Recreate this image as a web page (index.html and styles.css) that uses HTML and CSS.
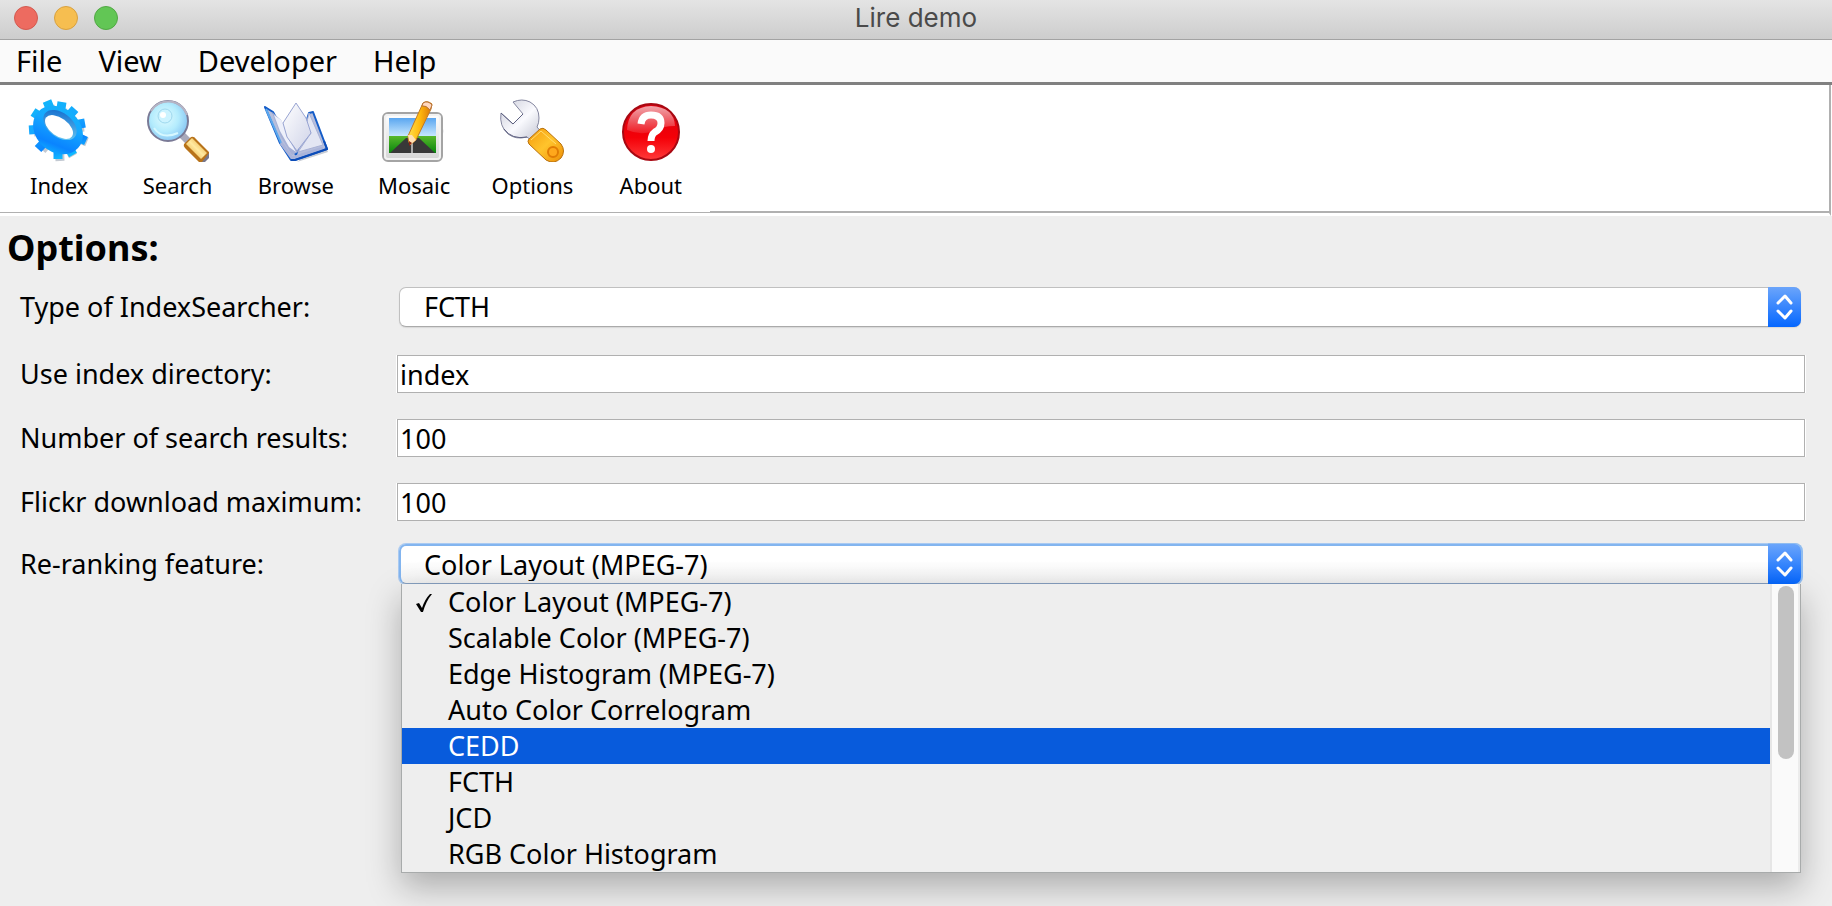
FILE: index.html
```html
<!DOCTYPE html>
<html lang="en">
<head>
<meta charset="utf-8">
<title>Lire demo</title>
<link rel="stylesheet" href="styles.css">
</head>
<body>
<header class="titlebar">
  <div class="lights">
    <button class="light light-close" type="button" aria-label="Close"></button>
    <button class="light light-minimize" type="button" aria-label="Minimize"></button>
    <button class="light light-zoom" type="button" aria-label="Zoom"></button>
  </div>
  <h1 class="window-title">Lire demo</h1>
</header>
<nav class="menubar">
  <button type="button">File</button>
  <button type="button">View</button>
  <button type="button">Developer</button>
  <button type="button">Help</button>
</nav>
<div class="toolbar">
  <div class="tools">
    <button class="tool" type="button">
      <svg viewBox="0 0 64 64" aria-hidden="true">
        <defs>
          <linearGradient id="gear" gradientUnits="userSpaceOnUse" x1="20" y1="4" x2="40" y2="60"><stop offset="0" stop-color="#12b4fa"/><stop offset=".4" stop-color="#16a8ff"/><stop offset=".75" stop-color="#0a84ff"/><stop offset="1" stop-color="#10c0ff"/></linearGradient>
          <linearGradient id="gearhole" x1="0" y1="0" x2="1" y2="1"><stop offset="0" stop-color="#0a62c8"/><stop offset=".5" stop-color="#3f9be0"/><stop offset="1" stop-color="#6fd4f8"/></linearGradient>
        </defs>
        <path d="M32 32L23 8M32 32L36 10M32 32L47 17M32 32L57 29M32 32L60 44M32 32L46 58M32 32L33 63M32 32L15 52M32 32L7 34M32 32L10 18" stroke="#c3c9d2" stroke-width="9"/>
        <path d="M31 30L20 3M31 30L35 4M31 30L48 11M31 30L58 25M31 30L59 43M31 30L46 57M31 30L31 61M31 30L11 51M31 30L2 32M31 30L6 14" stroke="url(#gear)" stroke-width="9"/>
        <ellipse cx="31" cy="32" rx="27" ry="22" transform="rotate(42 31 32)" fill="url(#gear)"/>
        <ellipse cx="33" cy="27" rx="19" ry="12" transform="rotate(38 33 27)" fill="url(#gearhole)"/>
        <ellipse cx="32" cy="29" rx="16" ry="9" transform="rotate(36 32 29)" fill="#fff"/>
      </svg>
      <span>Index</span>
    </button>
    <button class="tool" type="button">
      <svg viewBox="0 0 64 64" aria-hidden="true">
        <defs>
          <radialGradient id="lens" cx=".42" cy=".42" r=".62"><stop offset="0" stop-color="#e2fbff"/><stop offset=".55" stop-color="#b4ecfd"/><stop offset="1" stop-color="#86c4f2"/></radialGradient>
          <linearGradient id="grip" x1="0" y1="1" x2="1" y2="0"><stop offset="0" stop-color="#e39a20"/><stop offset=".5" stop-color="#ffe9a0"/><stop offset="1" stop-color="#e39a20"/></linearGradient>
        </defs>
        <path d="M36 36L43 43" stroke="#a9a9bb" stroke-width="7"/>
        <path d="M39 46L46 39Q49 38 51 41L64 54V59L59 64H54L40 50Q38 48 39 46Z" fill="#b8731a"/>
        <path d="M41 46L47 40L62 55L56 61Z" fill="url(#grip)"/>
        <path d="M64 55V60L60 64H57Z" fill="#77778b"/>
        <circle cx="23" cy="23" r="20" fill="url(#lens)" stroke="#7a7a96" stroke-width="2"/>
        <path d="M6 13A20 20 0 0 1 42 17" fill="none" stroke="#b6b4c4" stroke-width="2"/>
        <circle cx="20" cy="18" r="7" fill="#ccf3ff" stroke="#9ed8ee"/>
        <circle cx="18" cy="17" r="3" fill="#fff"/>
        <path d="M9 30Q17 42 33 35" fill="none" stroke="#d6f8ff" stroke-width="2"/>
      </svg>
      <span>Search</span>
    </button>
    <button class="tool" type="button">
      <svg viewBox="0 0 64 64" aria-hidden="true">
        <defs><linearGradient id="page" x1="0" y1="0" x2="1" y2="1"><stop offset="0" stop-color="#fff"/><stop offset="1" stop-color="#cfd3e8"/></linearGradient></defs>
        <path d="M33 64L64 54L62 49L50 16L58 44Z" fill="#c8ccd4"/>
        <path d="M1 9L9 14L32 57L45 15L49 14L63 51L31 62H27L16 45Z" fill="#b6bedc" stroke="#145cc8" stroke-width="2" stroke-linejoin="round"/>
        <path d="M2 11L17 45L28 60" fill="none" stroke="#5ba8ee" stroke-width="2"/>
        <path d="M8 14L17 22L34 54L28 57L17 39Z" fill="#a6b0d6"/>
        <path d="M17 22L20 27L23 38L32 54L25 49L16 33L10 17Z" fill="#eef0fa"/>
        <path d="M45 15L42 28L47 35L34 54L59 47Z" fill="#e3e6f3" stroke="#a9b2d6"/>
        <path d="M32 5L42 20L47 35L33 53L23 39L19 25Z" fill="url(#page)" stroke="#98a4d2"/>
        <path d="M17 45L28 60L59 50" fill="none" stroke="#aab4da" stroke-width="3"/>
        <path d="M27 62H31L63 51L60 43" fill="none" stroke="#0c4cb8" stroke-width="2"/>
      </svg>
      <span>Browse</span>
    </button>
    <button class="tool" type="button">
      <svg viewBox="0 0 64 64" aria-hidden="true">
        <defs>
          <linearGradient id="frame" x1="0" y1="0" x2="0" y2="1"><stop offset="0" stop-color="#fff"/><stop offset="1" stop-color="#d4d4d4"/></linearGradient>
          <linearGradient id="sky" x1="0" y1="0" x2="0" y2="1"><stop offset="0" stop-color="#5aa6f0"/><stop offset="1" stop-color="#cdebff"/></linearGradient>
          <linearGradient id="grass" x1="0" y1="0" x2="0" y2="1"><stop offset="0" stop-color="#58b82c"/><stop offset="1" stop-color="#08860c"/></linearGradient>
          <linearGradient id="pencil" x1="0" y1="0" x2="1" y2="0"><stop offset="0" stop-color="#ffe04c"/><stop offset=".5" stop-color="#ffb80c"/><stop offset="1" stop-color="#d87408"/></linearGradient>
        </defs>
        <path d="M59 27Q64 33 59 40" fill="#d5d5da"/>
        <rect x="1" y="15" width="59" height="48" rx="5" fill="url(#frame)" stroke="#a4a4a4" stroke-width="2"/>
        <rect x="3" y="17" width="55" height="44" rx="3" fill="none" stroke="#f2f2f2" stroke-width="2"/>
        <path d="M7 20H54V39H7Z" fill="url(#sky)"/>
        <path d="M7 38H54V55H7Z" fill="url(#grass)"/>
        <path d="M8 55L24 40H37L53 55Z" fill="#383838"/>
        <path d="M30 45V55" stroke="#aaa" stroke-width="2"/>
        <path d="M26 38L41 5Q45 2 50 6L49 11L34 42L28 47Q26 43 26 38Z" fill="url(#pencil)" stroke="#c47a20"/>
        <path d="M26 37L30 37L34 42L28 47Z" fill="#ffe0b4"/>
        <path d="M40 8Q44 7 48 12L50 7Q46 2 41 5Z" fill="#ffd8c0" stroke="#b8743c"/>
        <path d="M27 43L30 45L27 48Z" fill="#8c2410"/>
      </svg>
      <span>Mosaic</span>
    </button>
    <button class="tool" type="button">
      <svg viewBox="0 0 64 64" aria-hidden="true">
        <defs>
          <linearGradient id="steel" x1="0" y1="0" x2="1" y2="1"><stop offset="0" stop-color="#c9cbd8"/><stop offset=".5" stop-color="#fafafe"/><stop offset="1" stop-color="#b9bccb"/></linearGradient>
          <linearGradient id="handle" x1="0" y1="0" x2="1" y2="1"><stop offset="0" stop-color="#f49a0c"/><stop offset=".5" stop-color="#ffc42c"/><stop offset="1" stop-color="#ee8e06"/></linearGradient>
        </defs>
        <path d="M1 15L13 26L23 16L13 4Q22 0 30 4Q39 9 39 20Q39 25 37 29L43 36L33 44L27 39Q16 42 8 36Q-1 28 1 15Z" fill="url(#steel)" stroke="#84869f" stroke-width="1"/>
        <path d="M1 15L13 26L23 16M4 31Q12 42 27 39" fill="none" stroke="#5d6080" stroke-width="1"/>
        <path d="M29 41L40 31Q43 29 46 32L61 46Q66 53 61 60Q54 67 46 62L29 46Q27 43 29 41Z" fill="url(#handle)" stroke="#b8700c" stroke-width="1"/>
        <path d="M31 42L41 33L56 46" fill="none" stroke="#ffdc70"/>
        <circle cx="53" cy="54" r="5" fill="#ffa81c" stroke="#e07c04" stroke-width="2"/>
      </svg>
      <span>Options</span>
    </button>
    <button class="tool" type="button">
      <svg viewBox="0 0 64 64" aria-hidden="true">
        <defs>
          <linearGradient id="red" x1="0" y1="0" x2="0" y2="1"><stop offset="0" stop-color="#d80010"/><stop offset=".6" stop-color="#f40008"/><stop offset="1" stop-color="#ff3a3a"/></linearGradient>
          <linearGradient id="shine" x1="0" y1="0" x2="0" y2="1"><stop offset="0" stop-color="#fff" stop-opacity=".65"/><stop offset="1" stop-color="#fff" stop-opacity=".1"/></linearGradient>
        </defs>
        <circle cx="32" cy="34" r="28" fill="url(#red)" stroke="#a80812" stroke-width="2"/>
        <path d="M8 32Q9 9 32 8Q55 9 56 28Q44 28 34 33Q22 38 8 32Z" fill="url(#shine)"/>
        <path d="M22 26Q23 17 32 17Q42 17 42 25Q42 31 36 34Q32 37 32 43" fill="none" stroke="#fff" stroke-width="7"/>
        <circle cx="32" cy="51" r="4" fill="#fff"/>
      </svg>
      <span>About</span>
    </button>
  </div>
</div>
<main class="options">
  <h2>Options:</h2>
  <form>
    <div class="row row-first">
      <label for="searcher">Type of IndexSearcher:</label>
      <div class="combo">
        <select id="searcher"><option>FCTH</option></select>
        <svg class="arrows" viewBox="0 0 33 40" aria-hidden="true"><path d="M10 16L17 9L23 16M10 24L17 31L23 24"/></svg>
      </div>
    </div>
    <div class="row">
      <label for="directory">Use index directory:</label>
      <input id="directory" type="text" value="index">
    </div>
    <div class="row">
      <label for="results">Number of search results:</label>
      <input id="results" type="text" value="100">
    </div>
    <div class="row">
      <label for="maximum">Flickr download maximum:</label>
      <input id="maximum" type="text" value="100">
    </div>
    <div class="row row-last">
      <label for="feature">Re-ranking feature:</label>
      <div class="combo combo-open">
        <select id="feature"><option>Color Layout (MPEG-7)</option></select>
        <svg class="arrows" viewBox="0 0 33 40" aria-hidden="true"><path d="M10 16L17 9L23 16M10 24L17 31L23 24"/></svg>
        <div class="popup">
          <ul role="listbox" aria-label="Re-ranking feature">
            <li role="option" aria-selected="true"><svg class="check" viewBox="0 0 18 20" aria-hidden="true"><path d="M1 11L4 10L7 15Q10 6 15 1H17Q11 8 8 19H6Z"/></svg>Color Layout (MPEG-7)</li>
            <li role="option">Scalable Color (MPEG-7)</li>
            <li role="option">Edge Histogram (MPEG-7)</li>
            <li role="option">Auto Color Correlogram</li>
            <li role="option" class="active">CEDD</li>
            <li role="option">FCTH</li>
            <li role="option">JCD</li>
            <li role="option">RGB Color Histogram</li>
          </ul>
          <div class="scrollbar"><div class="thumb"></div></div>
        </div>
      </div>
    </div>
  </form>
</main>
</body>
</html>
```
FILE: styles.css
```css
* {
  box-sizing: border-box;
}

body {
  margin: 0;
  min-height: 100vh;
  background: #eeeeee;
  color: #000;
  font-family: "Lucida Grande", "Noto Sans", sans-serif;
  font-size: 27px;
}

button,
input,
select {
  font: inherit;
  color: inherit;
}

button {
  border: 0;
  padding: 0;
  background: none;
}

.titlebar {
  display: grid;
  grid-template-columns: 1fr auto 1fr;
  align-items: center;
  height: 40px;
  padding: 0 14px 3px;
  background: linear-gradient(#e4e4e4, #cdcdcd);
  border-bottom: 1px solid #a3a3a3;
}

.lights {
  display: flex;
  gap: 16px;
}

.light {
  width: 24px;
  height: 24px;
  border-radius: 50%;
  border: 1px solid;
}

.light-close {
  background: #ed6b60;
  border-color: #d35a50;
}

.light-minimize {
  background: #f6be50;
  border-color: #d8a140;
}

.light-zoom {
  background: #62c655;
  border-color: #51a844;
}

.window-title {
  margin: 0;
  font-family: "Inter", sans-serif;
  font-size: 26px;
  font-weight: 400;
  line-height: 36px;
  color: #4a4a4a;
}

.menubar {
  display: flex;
  gap: 36px;
  height: 45px;
  padding: 0 16px;
  background: #fafafa;
  border-bottom: 3px solid #808080;
  font-size: 29px;
  line-height: 42px;
}

.toolbar {
  height: 131px;
  margin-right: 1px;
  background: #fff;
  border-right: 2px solid #b0b0b0;
  border-bottom: 3px solid #fff;
  box-shadow: 1px 0 #fff;
  position: relative;
}

.toolbar::after {
  content: "";
  position: absolute;
  left: 0;
  right: 0;
  bottom: 0;
  height: 2px;
  background: linear-gradient(90deg, #fff, #fff) 0 0 / 710px 1px no-repeat, #b0b0b0;
}

.tools {
  display: grid;
  grid-template-columns: repeat(6, 1fr);
  width: 710px;
  padding-top: 13px;
}

.tool {
  display: flex;
  flex-direction: column;
  align-items: center;
  gap: 7px;
  font-size: 22px;
  line-height: 32px;
}

.tool svg {
  width: 64px;
  height: 64px;
}

.options {
  padding: 10px 27px 0 20px;
}

.options h2 {
  margin: 0 0 2px -13px;
  font-size: 36px;
  font-weight: 700;
  line-height: 44px;
}

.row {
  display: grid;
  grid-template-columns: 377px 1fr;
  align-items: center;
  min-height: 64px;
}

.row-first {
  min-height: 70px;
}

.row-last {
  min-height: 60px;
}

.row label {
  line-height: 36px;
}

.row input {
  width: 100%;
  height: 38px;
  padding: 0 2px;
  border: 1px solid #b0b0b0;
  border-radius: 0;
  background: #fff;
  box-shadow: -1px 0 #fff, 1px 0 #fff;
  outline: 0;
}

.combo {
  position: relative;
  height: 40px;
  margin: 0 4px 0 2px;
}

.combo select {
  display: block;
  appearance: none;
  width: 100%;
  height: 40px;
  padding: 0 40px 2px 24px;
  border: 1px solid #c0c0c0;
  border-bottom-color: #aaa;
  border-radius: 7px;
  background: #fff;
  box-shadow: 0 1px 1px #d8d8d8;
  outline: 0;
}

.combo-open select {
  border: 2px solid #83b5ef;
  border-bottom: 1px solid #86a0c0;
  padding-left: 23px;
  background: linear-gradient(#fff 40%, #f1f1f1);
  box-shadow: 0 0 0 1px #a9caf2;
}

.arrows {
  position: absolute;
  top: 0;
  right: 0;
  width: 33px;
  height: 40px;
  border-radius: 0 7px 7px 0;
  background: linear-gradient(#6ba5fb, #0567ff);
  fill: none;
  stroke: #fff;
  stroke-width: 3;
  stroke-linecap: round;
  stroke-linejoin: round;
  pointer-events: none;
}

.combo-open .arrows {
  box-shadow: 1px 0 0 1px #8fbcf0;
  clip-path: inset(-1px -2px 0 0);
}

.popup {
  position: absolute;
  top: 40px;
  left: 2px;
  right: 0;
  display: flex;
  background: #eeeeee;
  border: 1px solid #a8abab;
  border-top: 0;
  box-shadow: 0 14px 32px rgba(0, 0, 0, 0.28);
}

.popup ul {
  flex: 1;
  margin: 0;
  padding: 0;
  list-style: none;
}

.popup li {
  position: relative;
  padding-left: 46px;
  line-height: 36px;
}

.popup .active {
  background: #085bdc;
  color: #fff;
}

.check {
  position: absolute;
  left: 13px;
  top: 9px;
  width: 18px;
  height: 20px;
}

.scrollbar {
  width: 30px;
  padding: 2px 6px;
  background: #fafafa;
  border-left: 2px solid #e6e6e6;
  border-right: 2px solid #ececec;
}

.thumb {
  width: 16px;
  height: 61%;
  border-radius: 8px;
  background: #c2c2c2;
}
```
